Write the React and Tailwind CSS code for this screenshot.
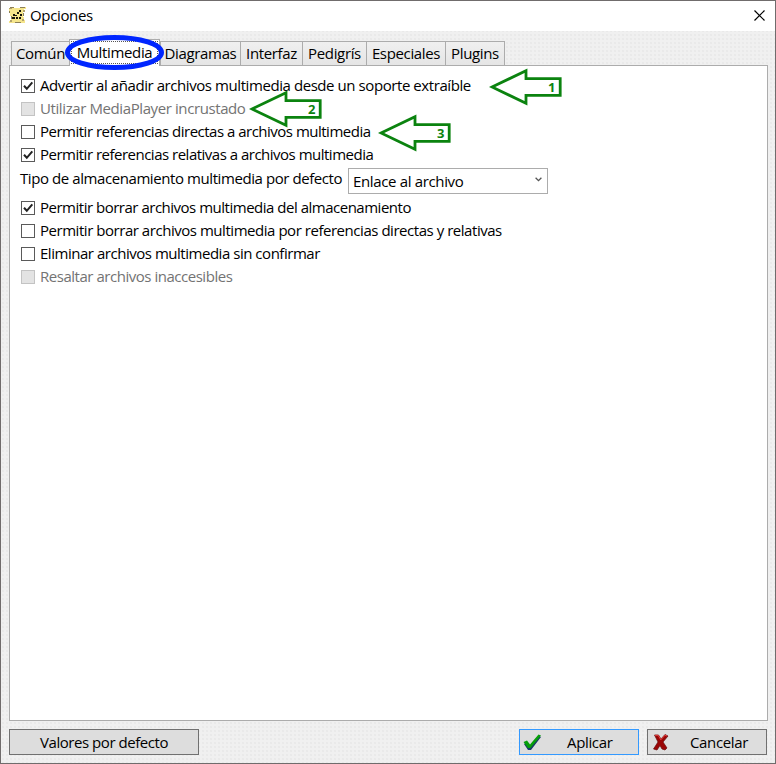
import React from "react";

const tabs = [
  { name: "Común", cls: "w-[59px]" },
  { name: "Multimedia", cls: "w-[91px]", active: true },
  { name: "Diagramas", cls: "w-[81px]" },
  { name: "Interfaz", cls: "w-[63px]" },
  { name: "Pedigrís", cls: "w-[65px]" },
  { name: "Especiales", cls: "w-[80px]" },
  { name: "Plugins", cls: "w-[60px]" },
];

function Check({ label, checked, disabled, track, children }) {
  return (
    <div className="relative flex h-[23px] items-center gap-[5px]">
      <span
        className={
          "flex h-[14px] w-[14px] shrink-0 border " +
          (disabled ? "border-[#c3c3c3] bg-[#e3e3e3]" : "border-[#5a5a5a] bg-white")
        }
      >
        {checked && (
          <svg width="12" height="12" viewBox="0 0 12 12">
            <path d="M2 5.8L4.8 8.8L10.3 2.4" fill="none" stroke="#222" strokeWidth="2" />
          </svg>
        )}
      </span>
      <span className={"whitespace-nowrap pb-[2px] " + track + (disabled ? " text-[#737373]" : " text-black")}>{label}</span>
      {children}
    </div>
  );
}

function Arrow({ n, cls }) {
  return (
    <span className={"absolute z-10 h-[38px] w-[74px] " + cls}>
      <svg className="absolute inset-0" width="74" height="38" viewBox="0 0 74 38">
        <path
          d="M3 19L37 2.8V10.7H71.2V27.4H37V35.2Z"
          fill="#fff"
          stroke="#0b830f"
          strokeWidth="2.8"
        />
      </svg>
      <span className="absolute left-[59px] top-[11px] text-[13px] font-bold leading-[17px] tracking-normal text-[#0b830f]">
        {n}
      </span>
    </span>
  );
}

export default function App() {
  return (
    <div className="relative flex h-[764px] w-[776px] flex-col overflow-hidden border border-[#706c6c] bg-[#f0f0f0] bg-[radial-gradient(circle_at_center,#e9e9e9_0.7px,transparent_0.8px)] bg-[size:4px_4px] font-['Open_Sans','Noto_Sans',sans-serif] text-[15px] leading-[22px] tracking-[-0.35px] text-black">
      <header className="flex h-[30px] shrink-0 items-center bg-white pl-[8px] pr-[10px]">
        <svg width="17" height="16" viewBox="0 0 17 16" shapeRendering="crispEdges" className="-mt-[2px]">
          <path d="M1 0H5V1H11V0H17V2H15V5H14V10H15V13H16V16H12V15H6V16H0V14H2V9H1V5H0V1H1Z" fill="#f5e58c" />
          <path d="M0 1H3V2H0ZM14 3H16V5H14ZM1 13H3V15H1ZM13 12H15V14H13Z" fill="#b2a26d" />
          <path d="M1 0H5V1H1ZM11 0H16V1H11ZM0 4H1V6H0ZM14 6H15V9H14ZM2 9H3V12H2ZM6 15H12V16H6Z" fill="#8d8058" />
          <path d="M10 3H12V5H10ZM8 5H10V7H8ZM4 7H6V9H4ZM6 8H8V9H6ZM11 7H13V9H11ZM3 10H6V12H3ZM7 10H9V12H7ZM10 10H12V12H10Z" fill="#17150c" />
        </svg>
        <span className="-mt-[2px] ml-[4px]">Opciones</span>
        <svg className="-mt-[2px] ml-auto" width="11" height="11" viewBox="0 0 11 11">
          <path d="M.5 .5L10.5 10.5M10.5 .5L.5 10.5" stroke="#000" strokeWidth="1.2" />
        </svg>
      </header>

      <nav className="flex h-[34px] shrink-0 items-end pl-[10px]">
        {tabs.map((t) =>
          t.active ? (
            <div key={t.name} className={"relative z-10 -mb-px flex h-[27px] shrink-0 items-start justify-center border border-b-0 border-[#acacac] bg-white p-px " + t.cls}>
              <span className="flex h-[23px] w-full items-center justify-center border border-dotted border-[#555] pb-[2px]">Multimedia</span>
              <svg className="absolute -left-[7px] -top-[6px]" width="102" height="38" viewBox="0 0 102 38">
                <ellipse cx="51.5" cy="18.5" rx="47" ry="15" fill="none" stroke="#0026ff" strokeWidth="5" />
              </svg>
            </div>
          ) : (
            <div key={t.name} className={"-mr-px flex h-[24px] shrink-0 items-center justify-center border border-b-0 border-[#acacac] bg-linear-to-b from-[#f0f0f0] to-[#e5e5e5] pb-[2px] " + t.cls}>
              {t.name}
            </div>
          )
        )}
      </nav>

      <main className="ml-[8px] flex h-[656px] w-[759px] shrink-0 flex-col border border-[#acacac] bg-white pl-[11px] pt-[8px]">
        <Check label="Advertir al añadir archivos multimedia desde un soporte extraíble" checked track="tracking-[-0.425px]">
          <Arrow n="1" cls="left-[468px] -top-[6px]" />
        </Check>
        <Check label="Utilizar MediaPlayer incrustado" disabled track="tracking-[-0.4px]">
          <Arrow n="2" cls="left-[228px] -top-[7px]" />
        </Check>
        <Check label="Permitir referencias directas a archivos multimedia" track="tracking-[-0.5px]">
          <Arrow n="3" cls="left-[357px] -top-[6px]" />
        </Check>
        <Check label="Permitir referencias relativas a archivos multimedia" checked track="tracking-[-0.5px]" />
        <div className="flex h-[30px] items-start">
          <span className="-ml-px mt-px w-[328px] shrink-0 whitespace-nowrap tracking-[-0.42px]">Tipo de almacenamiento multimedia por defecto</span>
          <div className="mt-[2px] flex h-[26px] w-[200px] shrink-0 items-center justify-between border border-[#acacac] pl-[4px] pr-[5px]">
            <span>Enlace al archivo</span>
            <svg width="7" height="5" viewBox="0 0 7 5" className="-mt-[3px]">
              <path d="M.6 .7L3.5 3.6L6.4 .7" fill="none" stroke="#555" strokeWidth="1.3" />
            </svg>
          </div>
        </div>
        <Check label="Permitir borrar archivos multimedia del almacenamiento" checked track="tracking-[-0.49px]" />
        <Check label="Permitir borrar archivos multimedia por referencias directas y relativas" track="tracking-[-0.46px]" />
        <Check label="Eliminar archivos multimedia sin confirmar" track="tracking-[-0.47px]" />
        <Check label="Resaltar archivos inaccesibles" disabled track="tracking-[-0.47px]" />
      </main>

      <footer className="flex pl-[8px] pt-[8px]">
        <button className="h-[26px] w-[190px] border border-[#707070] bg-[#dddddd] tracking-[-0.45px]">Valores por defecto</button>
        <button className="ml-[320px] flex h-[26px] w-[120px] items-center border border-[#3399ff] bg-[#dddddd] pl-[3px]">
          <svg width="19" height="18" viewBox="0 0 19 18" className="-mt-px">
            <path d="M1 10L4 8L7 12L16 2L18 3L8 16L5 16Z" fill="#173b67" transform="translate(0 1)" />
            <path d="M.5 9L4 7.5L7 11.5L15.5 1.5L18 2.5L7.5 15L5 15Z" fill="#069f09" />
          </svg>
          <span className="ml-[25px]">Aplicar</span>
        </button>
        <button className="ml-[8px] flex h-[26px] w-[120px] items-center border border-[#707070] bg-[#dddddd] pl-[5px]">
          <svg width="16" height="17" viewBox="0 0 16 17">
            <path d="M1.5 1H5.5L8 5L12 .5L15 2L10 8L14 14L12 16L9 15L7 11.5L4 16L.5 15L5 8Z" fill="#9b0505" stroke="#650b0b" strokeWidth=".7" />
            <path d="M2 1.3H5.2L7.8 5.8L12 1.2L14 2" fill="none" stroke="#e74444" />
          </svg>
          <span className="ml-[21px]">Cancelar</span>
        </button>
      </footer>
      <svg className="absolute -left-px top-[519px]" width="1" height="130" shapeRendering="crispEdges">
        <path d="M0 7H1V15H0ZM0 95H1V103H0ZM0 117H1V125H0Z" fill="#744d20" />
        <path d="M0 51H1V55H0ZM0 73H1V78H0Z" fill="#24366d" />
        <path d="M0 60H1V61H0ZM0 79H1V81H0Z" fill="#282020" />
      </svg>
    </div>
  );
}
